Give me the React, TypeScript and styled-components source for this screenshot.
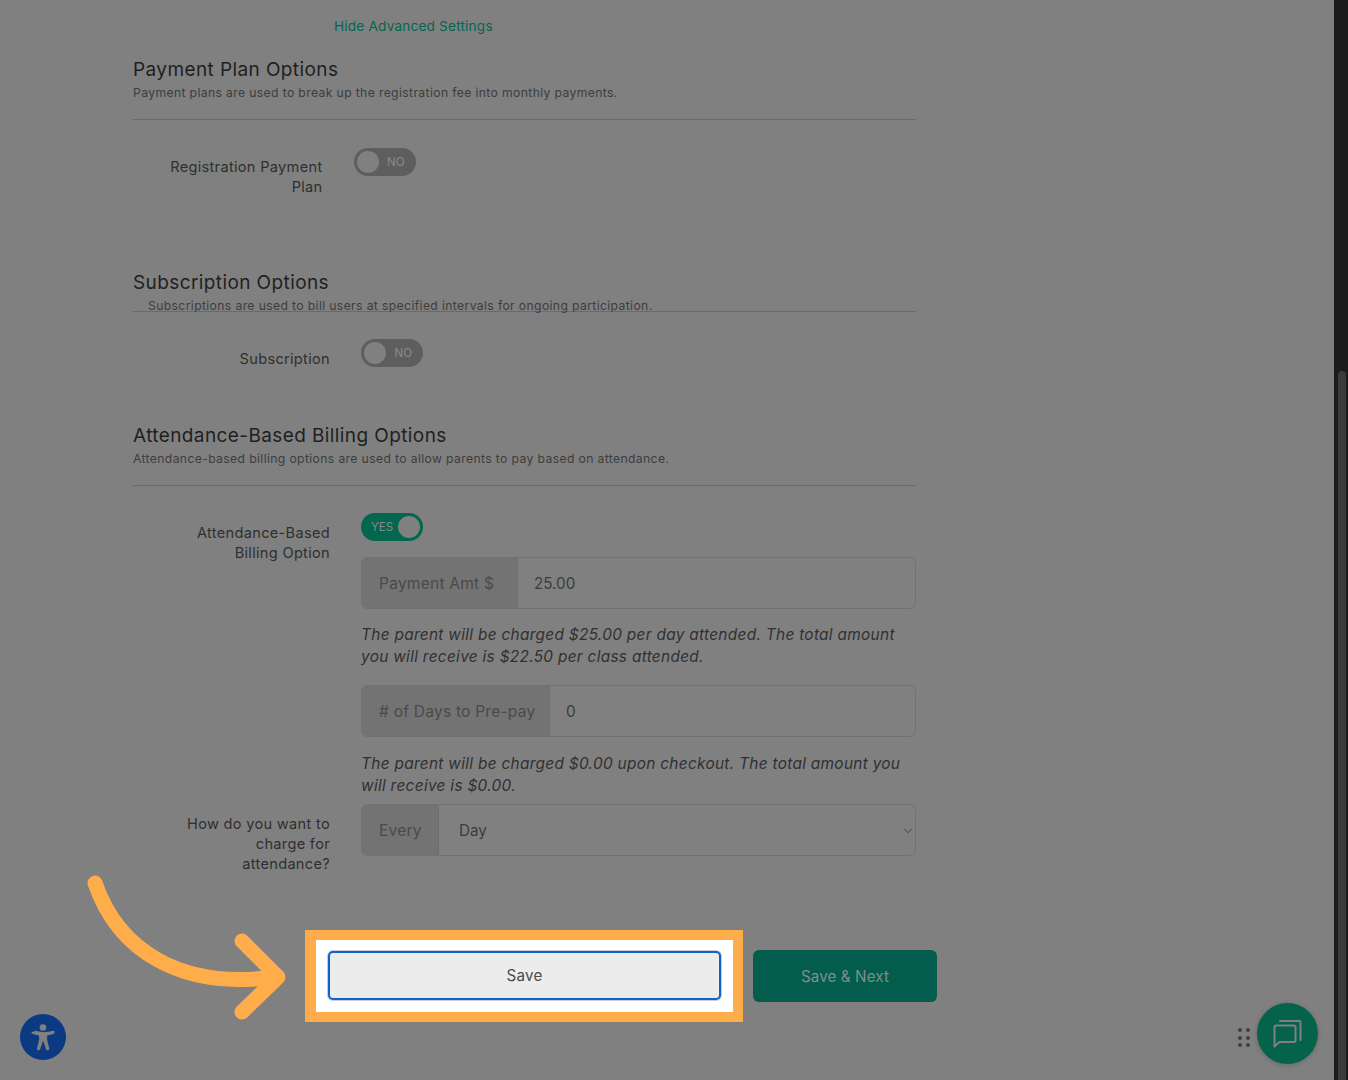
import * as React from 'react';
import styled, { createGlobalStyle } from 'styled-components';
import { ChevronDown } from 'lucide-react';

const GlobalStyle = createGlobalStyle`
    html, body {
        margin: 0;
        height: 1080px;
        overflow: hidden;
        background: #808080;
    }
    * {
        box-sizing: border-box;
    }
    body, input, select, button {
        font-family: Inter, "Open Sans", "Liberation Sans", sans-serif;
    }
`

const Page = styled.div`
    position: relative;
    height: 1080px;
    padding-right: 14px;
    background: #808080;
    overflow: hidden;
`

const Main = styled.main`
    width: 916px;
    padding: 16px 0 0 133px;
`

const AdvancedLink = styled.a`
    display: block;
    margin-left: 201px;
    font-size: 13.6px;
    line-height: 20px;
    letter-spacing: 0.2px;
    color: #03664f;
`

const SectionTitle = styled.h2<{ $top: number }>`
    margin: ${props => props.$top}px 0 0;
    font-size: 19px;
    line-height: 24px;
    font-weight: 400;
    letter-spacing: 0.4px;
    color: #1f1f1f;
`

const SectionDesc = styled.p<{ $indent?: boolean }>`
    margin: 3px 0 0 ${props => props.$indent ? '15px' : '0'};
    font-size: 12.2px;
    line-height: 16px;
    letter-spacing: 0.36px;
    color: #3d3d3d;
`

const Rule = styled.hr<{ $top: number }>`
    height: 1px;
    margin: ${props => props.$top}px 0 0;
    border: none;
    background: #6a6a6a;
`

const Row = styled.div<{ $label: number; $top: number }>`
    display: grid;
    grid-template-columns: ${props => props.$label}px 1fr;
    column-gap: 31px;
    margin-top: ${props => props.$top}px;
`

const Label = styled.label<{ $top?: number }>`
    padding-top: ${props => props.$top ?? 10}px;
    text-align: right;
    font-size: 14.6px;
    line-height: 20px;
    letter-spacing: 0.3px;
    color: #2f2f2f;
`

const Toggle = styled.div<{ $on?: boolean }>`
    display: flex;
    flex-direction: ${props => props.$on ? 'row' : 'row-reverse'};
    justify-content: space-between;
    align-items: center;
    width: 62px;
    height: 28px;
    padding: 0 ${props => props.$on ? '3px' : '11px'} 0 ${props => props.$on ? '10px' : '3px'};
    border-radius: 14px;
    background: ${props => props.$on ? '#03664f' : '#5e5e5e'};
    font-size: 11.5px;
    color: #8a8a8a;

    &::after {
        content: '';
        width: 22px;
        height: 22px;
        border-radius: 50%;
        background: #808080;
    }
`

const ToggleText = styled.span`
    line-height: 26px;
`

const Fields = styled.div`
    display: flex;
    flex-direction: column;
`

const InputGroup = styled.div<{ $top: number }>`
    position: relative;
    display: flex;
    height: 52px;
    margin-top: ${props => props.$top}px;
    border: 1px solid #727272;
    border-radius: 6px;
    overflow: hidden;
`

const Addon = styled.span<{ $width: number }>`
    flex: none;
    display: flex;
    align-items: center;
    width: ${props => props.$width}px;
    padding-left: 17px;
    border-right: 1px solid #6e6e6e;
    background: #737373;
    font-size: 15.6px;
    letter-spacing: 0.2px;
    color: #4a4a4a;
    white-space: nowrap;
`

const TextInput = styled.input`
    flex: 1;
    min-width: 0;
    padding: 0 16px;
    border: none;
    outline: none;
    background: transparent;
    font-size: 15.2px;
    color: #3c3c3c;
`

const Select = styled.select`
    flex: 1;
    padding: 0 20px;
    border: none;
    outline: none;
    appearance: none;
    background: transparent;
    font-size: 15.2px;
    color: #3c3c3c;
`

const Caret = styled(ChevronDown)`
    position: absolute;
    right: 0;
    top: 19px;
    color: #3c3c3c;
`

const Help = styled.p<{ $top: number; $bottom: number }>`
    margin: ${props => props.$top}px 0 ${props => props.$bottom}px;
    font-size: 15.4px;
    line-height: 22px;
    font-style: italic;
    letter-spacing: 0.3px;
    color: #303030;
`

const Actions = styled.div`
    display: flex;
    align-items: center;
    gap: 10px;
    margin: 56px 0 0 172px;
`

const Highlight = styled.div`
    flex: none;
    width: 438px;
    height: 92px;
    padding: 11px 0 0 12px;
    border: solid #ffac4a;
    border-width: 10px 10px 10px 11px;
    background: #fff;
`

const SaveButton = styled.button`
    display: block;
    width: 393px;
    height: 49px;
    border: 2px solid #0f62cf;
    border-radius: 5px;
    box-shadow: 0 0 0 1px #c9ccd2;
    background: #ececec;
    font-size: 15.2px;
    letter-spacing: 0.2px;
    color: #4b4b4b;
`

const NextButton = styled.button`
    flex: none;
    width: 184px;
    height: 52px;
    border: none;
    border-radius: 6px;
    background: #035c4c;
    font-size: 15.2px;
    letter-spacing: 0.1px;
    color: #7f8f8a;
`

const Arrow = styled.svg`
    position: absolute;
    left: 80px;
    top: 870px;
    pointer-events: none;
`

const A11yBadge = styled.div`
    position: absolute;
    left: 20px;
    top: 1014px;
    display: flex;
    align-items: center;
    justify-content: center;
    width: 46px;
    height: 46px;
    border-radius: 50%;
    background: #0b3a82;
`

const ChatWidget = styled.div`
    position: absolute;
    left: 1238px;
    top: 1003px;
    display: flex;
    align-items: center;
    gap: 7px;
`

const Dots = styled.div`
    display: grid;
    grid-template-columns: repeat(2, 4px);
    gap: 3.6px;
    margin-top: 8px;

    span {
        width: 4px;
        height: 4px;
        border-radius: 50%;
        background: #3f3f3f;
    }
`

const ChatButton = styled.div`
    display: flex;
    align-items: center;
    justify-content: center;
    width: 61px;
    height: 61px;
    border-radius: 50%;
    background: #05634c;
    box-shadow: 0 1px 5px rgba(0, 0, 0, 0.2);
`

const ScrollTrack = styled.div`
    position: absolute;
    top: 0;
    right: 0;
    bottom: 0;
    width: 14px;
    padding: 371px 2px 0 4px;
    background: #1b1b1b;
`

const ScrollThumb = styled.div`
    height: 100%;
    border-radius: 4px 4px 0 0;
    background: #3b3b3b;
`

export default function App() {
    return (
        <Page>
            <GlobalStyle />
            <Main>
                <AdvancedLink>Hide Advanced Settings</AdvancedLink>

                <SectionTitle $top={22}>Payment Plan Options</SectionTitle>
                <SectionDesc>Payment plans are used to break up the registration fee into monthly payments.</SectionDesc>
                <Rule $top={18} />
                <Row $label={189.5} $top={28}>
                    <Label $top={9}>Registration Payment<br />Plan</Label>
                    <div>
                        <Toggle><ToggleText>NO</ToggleText></Toggle>
                    </div>
                </Row>

                <SectionTitle $top={74}>Subscription Options</SectionTitle>
                <SectionDesc $indent>Subscriptions are used to bill users at specified intervals for ongoing participation.</SectionDesc>
                <Rule $top={-3} />
                <Row $label={197} $top={27}>
                    <Label>Subscription</Label>
                    <div>
                        <Toggle><ToggleText>NO</ToggleText></Toggle>
                    </div>
                </Row>

                <SectionTitle $top={55}>Attendance-Based Billing Options</SectionTitle>
                <SectionDesc>Attendance-based billing options are used to allow parents to pay based on attendance.</SectionDesc>
                <Rule $top={18} />
                <Row $label={197} $top={27}>
                    <Label>Attendance-Based<br />Billing Option</Label>
                    <Fields>
                        <Toggle $on><ToggleText>YES</ToggleText></Toggle>
                        <InputGroup $top={16}>
                            <Addon $width={156}>Payment Amt $</Addon>
                            <TextInput defaultValue="25.00" />
                        </InputGroup>
                        <Help $top={15} $bottom={17}>The parent will be charged $25.00 per day attended. The total amount you will receive is $22.50 per class attended.</Help>
                        <InputGroup $top={0}>
                            <Addon $width={188}># of Days to Pre-pay</Addon>
                            <TextInput defaultValue="0" />
                        </InputGroup>
                        <Help $top={16} $bottom={7}>The parent will be charged $0.00 upon checkout. The total amount you will receive is $0.00.</Help>
                    </Fields>
                </Row>
                <Row $label={197} $top={0}>
                    <Label>How do you want to<br />charge for<br />attendance?</Label>
                    <InputGroup $top={0}>
                        <Addon $width={77}>Every</Addon>
                        <Select defaultValue="Day">
                            <option>Day</option>
                        </Select>
                        <Caret size={14} strokeWidth={1.5} />
                    </InputGroup>
                </Row>

                <Actions>
                    <Highlight>
                        <SaveButton>Save</SaveButton>
                    </Highlight>
                    <NextButton>Save &amp; Next</NextButton>
                </Actions>
            </Main>

            <Arrow width="220" height="160" viewBox="80 870 220 160" fill="none" stroke="#ffac4a" strokeWidth="15" strokeLinecap="round" strokeLinejoin="round">
                <path d="M95 883C118 950 180 990 274 977" />
                <path d="M242 941L278 977L242 1012" />
            </Arrow>

            <A11yBadge>
                <svg width="34" height="34" viewBox="0 0 34 34" fill="#808080">
                    <circle cx="17" cy="7.5" r="3.3" />
                    <path d="M5.6 11.8c-.3 1 .2 1.8 1.1 2.1l6.3 1.7.2 3.6-2.2 9c-.2 1 .3 1.8 1.2 2 .9.2 1.7-.3 2-1.2l2.8-8h.2l2.8 8c.3.9 1.1 1.4 2 1.2.9-.2 1.4-1 1.2-2l-2.2-9 .2-3.6 6.3-1.7c.9-.3 1.4-1.1 1.1-2.1-.3-.9-1.2-1.3-2.1-1-3.5 1-6 1.4-8.2 1.4s-4.7-.4-8.2-1.4c-.9-.3-1.8.1-2.1 1z" />
                </svg>
            </A11yBadge>

            <ChatWidget>
                <Dots>
                    {[0, 1, 2, 3, 4, 5].map(i => <span key={i} />)}
                </Dots>
                <ChatButton>
                    <svg width="30" height="30" viewBox="0 0 30 30" fill="none" stroke="#808080" strokeWidth="2" strokeLinejoin="round" strokeLinecap="round">
                        <path d="M2.5 8a1.5 1.5 0 0 1 1.5-1.5h18a1.5 1.5 0 0 1 1.5 1.5v13.5a1.5 1.5 0 0 1-1.5 1.5H7.5l-5 4.5z" />
                        <path d="M8 2h19.5a1 1 0 0 1 1 1v18" />
                    </svg>
                </ChatButton>
            </ChatWidget>

            <ScrollTrack>
                <ScrollThumb />
            </ScrollTrack>
        </Page>
    );
}
